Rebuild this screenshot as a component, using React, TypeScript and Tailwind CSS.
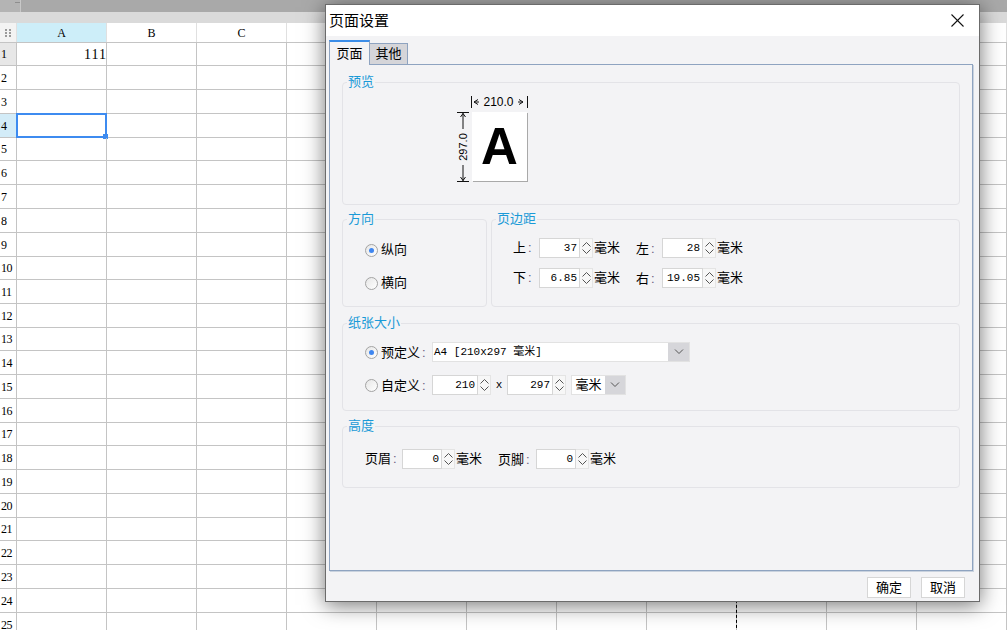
const rowLines = [42, 65, 89, 113, 137, 160, 184, 208, 232, 256, 279, 303, 327, 350, 374, 398, 422, 445, 469, 493, 517, 540, 564, 588, 612, 636];
// only A-C headers are visible, the rest sit behind the dialog
const cols = ['A', 'B', 'C', '', '', '', '', '', '', '', ''];

function Spinner() {
  return (
    <div className="w-[13px] h-[20px] flex items-center justify-center bg-[#f7f7f7] border-y border-r border-[#e4e4e4]">
      <svg width="11" height="18" viewBox="0 0 11 18" fill="none" stroke="#555" strokeWidth="1">
        <polyline points="1.5,7.5 5.5,3.5 9.5,7.5" />
        <polyline points="1.5,10.5 5.5,14.5 9.5,10.5" />
      </svg>
    </div>
  );
}

function NumInput({ value, w }: { value: string; w: string }) {
  return (
    <div className="flex items-center">
      <div className={`${w} h-[20px] bg-white border border-[#d6d6d6] text-right pr-[2px] text-[11px] leading-[18px] font-['Liberation_Mono','Noto_Sans_CJK_SC',monospace] text-black`}>
        {value}
      </div>
      <Spinner />
    </div>
  );
}

function Label({ text, w }: { text: string; w: string }) {
  return (
    <span className={`${w} shrink-0 text-[13px] leading-[20px] text-black`}>
      {text}
      <span className="text-[#6a5a80] ml-[2px]">:</span>
    </span>
  );
}

function Radio({ checked }: { checked?: boolean }) {
  return (
    <span className="w-[13px] h-[13px] shrink-0 rounded-full border border-[#a3a3a3] bg-linear-to-br from-[#e6e6e6] to-white flex items-center justify-center">
      {checked && <span className="w-[5px] h-[5px] rounded-full bg-[#3f86f0]" />}
    </span>
  );
}

function Group({ title, className, children }: { title: string; className: string; children?: React.ReactNode }) {
  return (
    <div className={`relative border border-[#e3e3e7] rounded-[4px] ${className}`}>
      <span className="absolute -top-[10px] left-[4px] px-px bg-[#f3f3f5] text-[13px] leading-[17px] text-[#1a9ad7]">
        {title}
      </span>
      {children}
    </div>
  );
}

function Chevron() {
  return (
    <svg width="10" height="6" viewBox="0 0 10 6" fill="none" stroke="#555" strokeWidth="1">
      <polyline points="1,0.5 5,4.5 9,0.5" />
    </svg>
  );
}

export default function App() {
  return (
    <div className="relative w-[1007px] h-[630px] overflow-hidden bg-white font-['Liberation_Sans','Noto_Sans_CJK_SC',sans-serif]">
      {/* top bars */}
      <div className="h-[12px] flex bg-[#a9a9a9]">
        <div className="w-[21px] bg-[#b4b4b4] border-r border-[#c8c8c8] relative">
          <span className="absolute top-[2px] right-0 w-[5px] h-px bg-[#8e8e8e]" />
        </div>
      </div>
      <div className="h-[11px] bg-[#dadada]" />

      {/* column header */}
      <div className="flex h-[20px] border-b border-[#c4c4c4]">
        <div className="w-[17px] shrink-0 border-r border-[#e0e0e0] bg-[#f3f3f3] flex items-center justify-center">
          <svg width="6" height="8" viewBox="0 0 6 8" fill="#9a9a9a">
            <rect x="0" y="0" width="2" height="2" />
            <rect x="4" y="0" width="2" height="2" />
            <rect x="0" y="3" width="2" height="2" />
            <rect x="4" y="3" width="2" height="2" />
            <rect x="0" y="6" width="2" height="2" />
            <rect x="4" y="6" width="2" height="2" />
          </svg>
        </div>
        {cols.map((c, i) => (
          <div
            key={i}
            className={`w-[90px] shrink-0 border-r border-[#e0e0e0] flex items-center justify-center text-[12px] text-black font-['Liberation_Serif',serif] ${i === 0 ? 'bg-[#cdeef9]' : 'bg-white'}`}
          >
            {c}
          </div>
        ))}
      </div>

      {/* rows */}
      {rowLines.slice(1).map((y, r) => {
        const h = y - rowLines[r];
        const n = r + 1;
        const headBg = n === 1 ? 'bg-[#e7e7e7]' : n === 4 ? 'bg-[#d3ecf8]' : 'bg-white';
        return (
          <div key={n} className="flex border-b border-[#c4c4c4]" style={{ height: h }}>
            <div className={`w-[17px] shrink-0 border-r border-[#c4c4c4] ${headBg} pl-px flex items-center text-[12px] text-black font-['Liberation_Serif',serif] tracking-[-0.5px]`}>
              {n}
            </div>
            {cols.map((c, i) => (
              <div key={i} className="relative w-[90px] shrink-0 border-r border-[#c4c4c4] flex items-center justify-end text-[14px] font-['Liberation_Serif',serif] text-black">
                {n === 1 && i === 0 && <span className="tracking-[1px] -mr-px">111</span>}
                {n === 4 && i === 0 && (
                  <div className="absolute -left-px -top-px w-[91px] h-[25px] border-2 border-[#3d8bf0]">
                    <span className="absolute -right-[3px] -bottom-[3px] w-[5px] h-[5px] bg-[#3d8bf0]" />
                  </div>
                )}
              </div>
            ))}
          </div>
        );
      })}

      {/* page break */}
      <div className="absolute left-[736px] top-[43px] h-[600px] border-l border-dashed border-black" />

      {/* dialog */}
      <div className="absolute left-[325px] top-[4px] w-[655px] h-[598px] border border-[#6b6b6b] bg-[#f3f3f5] shadow-[0_3px_20px_rgba(0,0,0,0.55)] flex flex-col">
        <div className="h-[31px] shrink-0 bg-white flex items-center justify-between pl-[3px] pr-[15px]">
          <span className="text-[15px] leading-[18px] text-black">页面设置</span>
          <svg width="13" height="13" viewBox="0 0 13 13" stroke="#111" strokeWidth="1.1">
            <line x1="0.5" y1="0.5" x2="12.5" y2="12.5" />
            <line x1="12.5" y1="0.5" x2="0.5" y2="12.5" />
          </svg>
        </div>

        <div className="flex-1 flex flex-col pt-[4px] pl-[3px]">
          {/* tabs */}
          <div className="flex h-[24px] items-end">
            <div className="relative z-10 w-[41px] h-[25px] -mb-px border-t-2 border-t-[#3b8de8] border-x border-x-[#8ea3c0] bg-[#f3f3f5] flex items-center justify-center text-[13px] leading-[16px] text-black">
              页面
            </div>
            <div className="w-[38px] h-[21px] border-t border-r border-[#8ea3c0] bg-[#d5d5d9] flex items-center justify-center text-[13px] leading-[16px] text-black">
              其他
            </div>
          </div>

          {/* panel */}
          <div className="w-[644px] h-[507px] border border-[#8ea3c0] shadow-[1px_1px_0_#c9d2de] bg-[#f3f3f5] px-[12px] flex flex-col">
            <Group title="预览" className="mt-[17px] h-[123px]">
              <div className="pt-[13px] pl-[114px]">
                <div className="ml-[14px] w-[57px] h-[12px] flex items-center justify-between">
                  <svg width="9" height="12" viewBox="0 0 9 12" fill="none" stroke="#111" strokeWidth="1">
                    <line x1="0.5" y1="0" x2="0.5" y2="12" />
                    <polyline points="7,3.5 3,6 7,8.5" />
                    <line x1="3" y1="6" x2="8" y2="6" />
                  </svg>
                  <span className="text-[12px] leading-[12px] text-black">210.0</span>
                  <svg width="11" height="12" viewBox="0 0 11 12" fill="none" stroke="#111" strokeWidth="1">
                    <line x1="10.5" y1="0" x2="10.5" y2="12" />
                    <polyline points="2,3.5 6,6 2,8.5" />
                    <line x1="1" y1="6" x2="6" y2="6" />
                  </svg>
                </div>
                <div className="flex mt-[4px]">
                  <div className="relative w-[12px] h-[70px]">
                    <svg className="absolute inset-0" width="12" height="70" viewBox="0 0 12 70" fill="none" stroke="#111" strokeWidth="1">
                      <line x1="0" y1="0.5" x2="12" y2="0.5" />
                      <line x1="6" y1="1" x2="6" y2="17" />
                      <polyline points="3.5,5 6,1.5 8.5,5" />
                      <line x1="0" y1="69.5" x2="12" y2="69.5" />
                      <line x1="6" y1="53" x2="6" y2="69" />
                      <polyline points="3.5,65 6,68.5 8.5,65" />
                    </svg>
                    <span className="absolute left-1/2 top-1/2 -translate-x-1/2 -translate-y-1/2 -rotate-90 text-[11px] leading-[11px] text-black">
                      297.0
                    </span>
                  </div>
                  <div className="ml-[3px] w-[55px] h-[69px] bg-white shadow-[1px_1px_0_#a9a9a9] flex items-center justify-center text-[51px] leading-none font-bold text-black font-['Liberation_Sans',sans-serif]">
                    A
                  </div>
                </div>
              </div>
            </Group>

            <div className="mt-[14px] h-[88px] flex gap-[4px]">
              <Group title="方向" className="w-[145px] h-full">
                <div className="pt-[20px] pl-[22px] flex flex-col gap-[13px]">
                  <div className="h-[20px] flex items-center gap-[3px] text-[13px] text-black">
                    <Radio checked />
                    纵向
                  </div>
                  <div className="h-[20px] flex items-center gap-[3px] text-[13px] text-black">
                    <Radio />
                    横向
                  </div>
                </div>
              </Group>
              <Group title="页边距" className="flex-1 h-full">
                <div className="pt-[18px] pl-[21px] flex flex-col gap-[10px]">
                  <div className="flex items-center h-[20px]">
                    <Label text="上" w="w-[26px]" />
                    <NumInput value="37" w="w-[41px]" />
                    <span className="ml-px text-[13px] text-black">毫米</span>
                    <span className="ml-[16px]"><Label text="左" w="w-[26px] inline-block" /></span>
                    <NumInput value="28" w="w-[41px]" />
                    <span className="ml-px text-[13px] text-black">毫米</span>
                  </div>
                  <div className="flex items-center h-[20px]">
                    <Label text="下" w="w-[26px]" />
                    <NumInput value="6.85" w="w-[41px]" />
                    <span className="ml-px text-[13px] text-black">毫米</span>
                    <span className="ml-[16px]"><Label text="右" w="w-[26px] inline-block" /></span>
                    <NumInput value="19.05" w="w-[41px]" />
                    <span className="ml-px text-[13px] text-black">毫米</span>
                  </div>
                </div>
              </Group>
            </div>

            <Group title="纸张大小" className="mt-[16px] h-[88px]">
              <div className="pt-[18px] pl-[22px] flex flex-col gap-[13px]">
                <div className="flex items-center h-[20px]">
                  <Radio checked />
                  <span className="ml-[3px]"><Label text="预定义" w="w-[51px] inline-block" /></span>
                  <div className="flex h-[20px] w-[258px] bg-white border border-[#e2e2e2]">
                    <span className="flex-1 pl-px text-[11px] leading-[18px] text-black font-['Liberation_Mono','Noto_Sans_CJK_SC',monospace]">
                      A4 [210x297 毫米]
                    </span>
                    <span className="w-[21px] bg-[#d6d6da] flex items-center justify-center">
                      <Chevron />
                    </span>
                  </div>
                </div>
                <div className="flex items-center h-[20px]">
                  <Radio />
                  <span className="ml-[3px]"><Label text="自定义" w="w-[51px] inline-block" /></span>
                  <NumInput value="210" w="w-[46px]" />
                  <span className="w-[16px] text-center text-[11px] text-black font-['Liberation_Mono',monospace]">x</span>
                  <NumInput value="297" w="w-[46px]" />
                  <div className="ml-[5px] flex h-[20px] w-[55px] bg-white border border-[#e2e2e2]">
                    <span className="flex-1 flex items-center justify-center text-[13px] text-black">毫米</span>
                    <span className="w-[20px] bg-[#d6d6da] flex items-center justify-center">
                      <Chevron />
                    </span>
                  </div>
                </div>
              </div>
            </Group>

            <Group title="高度" className="mt-[15px] h-[62px]">
              <div className="pt-[22px] pl-[22px] flex items-center h-[20px] box-content">
                <Label text="页眉" w="w-[37px]" />
                <NumInput value="0" w="w-[40px]" />
                <span className="ml-px text-[13px] text-black">毫米</span>
                <span className="ml-[16px]"><Label text="页脚" w="w-[38px] inline-block" /></span>
                <NumInput value="0" w="w-[40px]" />
                <span className="ml-px text-[13px] text-black">毫米</span>
              </div>
            </Group>
          </div>

          {/* buttons */}
          <div className="flex justify-end gap-[10px] pr-[14px] mt-[6px]">
            <button className="w-[44px] h-[21px] bg-white border border-[#d6d6d6] text-[13px] text-black leading-none">确定</button>
            <button className="w-[44px] h-[21px] bg-white border border-[#d6d6d6] text-[13px] text-black leading-none">取消</button>
          </div>
        </div>
      </div>
    </div>
  );
}
